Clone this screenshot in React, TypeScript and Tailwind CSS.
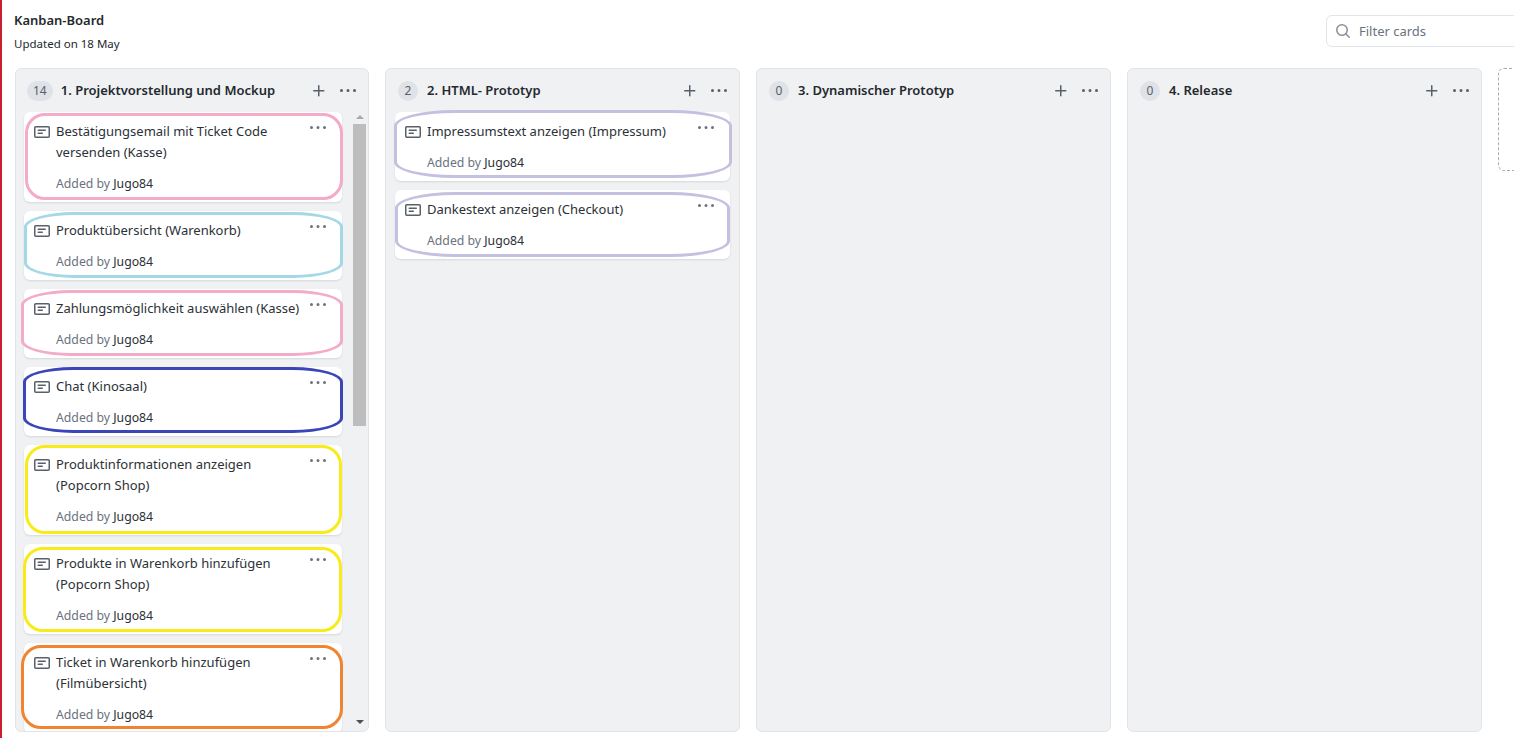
const Note = () => (
  <svg viewBox="0 0 16 16" className="h-4 w-4 shrink-0 fill-[#586069]">
    <path d="M0 3.75C0 2.784.784 2 1.75 2h12.5c.966 0 1.75.784 1.75 1.75v8.5A1.75 1.75 0 0 1 14.25 14H1.75A1.75 1.75 0 0 1 0 12.25Zm1.75-.25a.25.25 0 0 0-.25.25v8.5c0 .138.112.25.25.25h12.5a.25.25 0 0 0 .25-.25v-8.5a.25.25 0 0 0-.25-.25ZM3.5 6.25a.75.75 0 0 1 .75-.75h7a.75.75 0 0 1 0 1.5h-7a.75.75 0 0 1-.75-.75Zm.75 2.25h4a.75.75 0 0 1 0 1.5h-4a.75.75 0 0 1 0-1.5Z" />
  </svg>
)

const Kebab = ({ className }: { className: string }) => (
  <svg viewBox="0 0 16 16" className={className}>
    <path d="M8 9a1.5 1.5 0 1 0 0-3 1.5 1.5 0 0 0 0 3ZM1.5 9a1.5 1.5 0 1 0 0-3 1.5 1.5 0 0 0 0 3Zm13 0a1.5 1.5 0 1 0 0-3 1.5 1.5 0 0 0 0 3Z" />
  </svg>
)

const Plus = () => (
  <svg viewBox="0 0 16 16" className="h-4 w-4 fill-[#586069]">
    <path d="M7.75 2a.75.75 0 0 1 .75.75V7h4.25a.75.75 0 0 1 0 1.5H8.5v4.25a.75.75 0 0 1-1.5 0V8.5H2.75a.75.75 0 0 1 0-1.5H7V2.75A.75.75 0 0 1 7.75 2Z" />
  </svg>
)

type CardData = { title: string[]; ring: string }

const Card = ({ title, ring }: CardData) => (
  <article className="relative shrink-0 rounded-md bg-white pb-[9px] pl-2.5 pr-2.5 pt-[9px] shadow-[0_1px_2px_rgba(27,31,35,0.12)]">
    <div className="flex items-start gap-1.5">
      <div className="pt-[3px]">
        <Note />
      </div>
      <p className="text-[13px] leading-[21px] text-[#2b3137]">
        {title.map((line) => (
          <span key={line} className="block whitespace-nowrap">
            {line}
          </span>
        ))}
      </p>
    </div>
    <p className="mt-[12px] pl-[22px] text-[12.25px] leading-[18px] text-[#6a737d]">
      Added by <span className="text-[#2b3137]">Jugo84</span>
    </p>
    <Kebab className="absolute right-[15px] top-[8px] h-4 w-[18px] fill-[#6a737d]" />
    <div className={ring} />
  </article>
)

const Column = ({
  count,
  name,
  width,
  children,
}: {
  count: number
  name: string
  width: string
  children?: React.ReactNode
}) => (
  <section className={`flex h-[664px] shrink-0 flex-col overflow-hidden rounded-md border border-[#e1e4e8] bg-[#eff1f3] ${width}`}>
    <header className={`flex h-[43px] shrink-0 items-center pr-[11px] pt-[1px] ${count > 9 ? 'pl-[11px]' : 'pl-3'}`}>
      <span className="flex h-5 min-w-5 items-center justify-center rounded-full bg-[#dfe2e6] px-[6px] text-xs text-[#586069]">
        {count}
      </span>
      <h2 className={`flex-1 text-[13px] font-semibold text-[#24292e] ${count > 9 ? 'ml-2' : 'ml-[9px]'}`}>{name}</h2>
      <Plus />
      <Kebab className="ml-3 h-4 w-[18px] fill-[#586069]" />
    </header>
    {children}
  </section>
)

const backlog: CardData[] = [
  {
    title: ['Bestätigungsemail mit Ticket Code', 'versenden (Kasse)'],
    ring: 'absolute left-px top-px h-[87px] w-[318px] rounded-[20px] border-[3px] border-[#f3abc8]',
  },
  {
    title: ['Produktübersicht (Warenkorb)'],
    ring: 'absolute left-0 top-px h-[66px] w-[319px] rounded-[50px/15px] border-[3px] border-[#a3d8e6]',
  },
  {
    title: ['Zahlungsmöglichkeit auswählen (Kasse)'],
    ring: 'absolute -left-[3px] top-px h-[66px] w-[322px] rounded-[50px/15px] border-[3px] border-[#f3abc8]',
  },
  {
    title: ['Chat (Kinosaal)'],
    ring: 'absolute -left-px top-0 h-[66px] w-[320px] rounded-[50px/15px] border-[3px] border-[#3b45b8]',
  },
  {
    title: ['Produktinformationen anzeigen', '(Popcorn Shop)'],
    ring: 'absolute left-px top-0 h-[89px] w-[317px] rounded-[20px] border-[3px] border-[#f9ea1c]',
  },
  {
    title: ['Produkte in Warenkorb hinzufügen', '(Popcorn Shop)'],
    ring: 'absolute -left-px top-[3px] h-[85px] w-[319px] rounded-[20px] border-[3px] border-[#f9ea1c]',
  },
  {
    title: ['Ticket in Warenkorb hinzufügen', '(Filmübersicht)'],
    ring: 'absolute -left-[3px] top-[2px] h-[84px] w-[322px] rounded-[20px] border-[3px] border-[#f08431]',
  },
]

const prototype: CardData[] = [
  {
    title: ['Impressumstext anzeigen (Impressum)'],
    ring: 'absolute -left-px -top-[2px] h-[68px] w-[338px] rounded-[60px/16px] border-[3px] border-[#c5bfe0]',
  },
  {
    title: ['Dankestext anzeigen (Checkout)'],
    ring: 'absolute left-0 top-[2px] h-[65px] w-[335px] rounded-[60px/16px] border-[3px] border-[#c5bfe0]',
  },
]

export default function App() {
  return (
    <div className="h-[738px] w-[1514px] overflow-hidden border-l-2 border-[#c8202f] bg-white font-['Noto_Sans',sans-serif]">
      <div className="flex h-[68px] items-start justify-between pl-3">
        <div className="pt-[10px]">
          <h1 className="text-[13px] font-semibold leading-5 text-[#24292e]">Kanban-Board</h1>
          <p className="mt-[4px] text-[11.5px] leading-5 text-[#24292e]">Updated on 18 May</p>
        </div>
        <div className="-mr-[12px] mt-[15px] flex h-[32px] w-[200px] shrink-0 items-center gap-2 rounded-md border border-[#e1e4e8] pl-2">
          <svg viewBox="0 0 16 16" className="h-4 w-4 fill-[#8a9199]">
            <path d="M10.68 11.74a6 6 0 0 1-7.922-8.982 6 6 0 0 1 8.982 7.922l3.04 3.04a.749.749 0 0 1-.326 1.275.749.749 0 0 1-.734-.215ZM11.5 7a4.499 4.499 0 1 0-8.997 0A4.499 4.499 0 0 0 11.5 7Z" />
          </svg>
          <span className="pt-px text-[13px] text-[#6a737d]">Filter cards</span>
        </div>
      </div>

      <div className="flex gap-4 pl-[13px]">
        <Column count={14} name="1. Projektvorstellung und Mockup" width="w-[354px]">
          <div className="flex min-h-0 flex-1">
            <div className="ml-[5px] flex w-[322px] shrink-0 flex-col gap-[9px] overflow-hidden pl-[3px] pr-px">
              {backlog.map((card) => (
                <Card key={card.title[0]} {...card} />
              ))}
            </div>
            <div className="ml-[10px] flex w-[13px] shrink-0 flex-col items-center">
              <span className="mt-[3px] h-0 w-0 border-x-[4px] border-b-[4px] border-x-transparent border-b-[#a9a9a9]" />
              <span className="mt-[5px] h-[302px] w-full bg-[#bdbdbd]" />
              <span className="mt-[294px] h-0 w-0 border-x-[4px] border-t-[4px] border-x-transparent border-t-[#505050]" />
            </div>
          </div>
        </Column>
        <Column count={2} name="2. HTML- Prototyp" width="w-[355px]">
          <div className="flex flex-col gap-[9px] pl-[9px] pr-[9px]">
            {prototype.map((card) => (
              <Card key={card.title[0]} {...card} />
            ))}
          </div>
        </Column>
        <Column count={0} name="3. Dynamischer Prototyp" width="w-[355px]" />
        <Column count={0} name="4. Release" width="w-[355px]" />
        <div className="h-[103px] w-[60px] shrink-0 rounded-md border border-dashed border-[#a8adb3]" />
      </div>
    </div>
  )
}
